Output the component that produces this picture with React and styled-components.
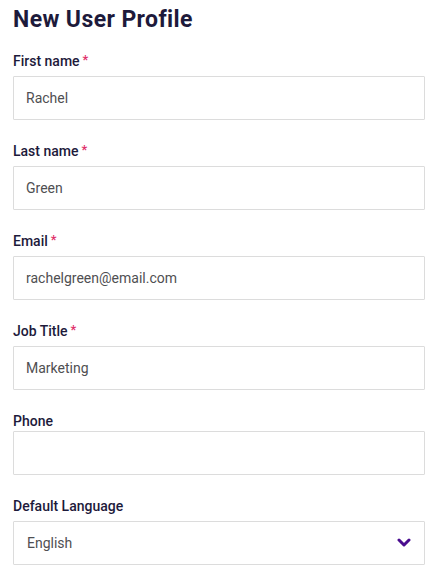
import styled, { createGlobalStyle } from 'styled-components'

const fields = [
  { label: 'First name', value: 'Rachel', required: true },
  { label: 'Last name', value: 'Green', required: true },
  { label: 'Email', value: 'rachelgreen@email.com', required: true },
  { label: 'Job Title', value: 'Marketing', required: true },
  { label: 'Phone', value: '', tight: true },
]

const App = () => (
  <>
    <GlobalStyle />
    <Form>
      <Title>New User Profile</Title>
      {fields.map(f => (
        <Field key={f.label}>
          <Label $tight={f.tight}>
            {f.label}
            {f.required && <Required>*</Required>}
          </Label>
          <Input type="text" defaultValue={f.value} />
        </Field>
      ))}
      <Field>
        <Label>Default Language</Label>
        <Select>
          <span>English</span>
          <Chevron viewBox="0 0 14 10">
            <polyline points="2,2 7,7 12,2" />
          </Chevron>
        </Select>
      </Field>
    </Form>
  </>
)

export default App

const GlobalStyle = createGlobalStyle`
  body {
    margin: 0;
    background: #fff;
    font-family: Roboto, "Liberation Sans", sans-serif;
  }
`

const Form = styled.form`
  display: flex;
  flex-direction: column;
  gap: 21px;
  padding: 6px 16px 0 13px;
`

const Title = styled.h1`
  margin: 0 0 -4px;
  font-size: 23px;
  line-height: 28px;
  font-weight: 700;
  letter-spacing: 0.4px;
  color: #1d1a3b;
`

const Field = styled.div`
  display: flex;
  flex-direction: column;
`

const Label = styled.label`
  display: flex;
  gap: 3px;
  font-size: 14px;
  line-height: 20px;
  font-weight: 500;
  color: #1d1a3b;
  margin-bottom: ${p => (p.$tight ? '0' : '5px')};
`

const Required = styled.span`
  color: #e0306a;
  font-size: 13px;
  line-height: 17px;
`

const Input = styled.input`
  box-sizing: border-box;
  height: 44px;
  width: 100%;
  padding: 0 12px;
  border: 1px solid #dcdcdc;
  border-radius: 1px;
  font: 400 14px Roboto, "Liberation Sans", sans-serif;
  color: #4f4f52;
  background: #fff;
  outline: none;
`

const Select = styled.div`
  box-sizing: border-box;
  height: 44px;
  display: flex;
  align-items: center;
  justify-content: space-between;
  padding: 0 13px 0 13px;
  border: 1px solid #dcdcdc;
  border-radius: 1px;
  font-size: 14px;
  color: #4f4f52;
`

const Chevron = styled.svg`
  width: 14px;
  height: 10px;
  fill: none;
  stroke: #4a0d8f;
  stroke-width: 3;
  stroke-linecap: round;
  stroke-linejoin: round;
`
